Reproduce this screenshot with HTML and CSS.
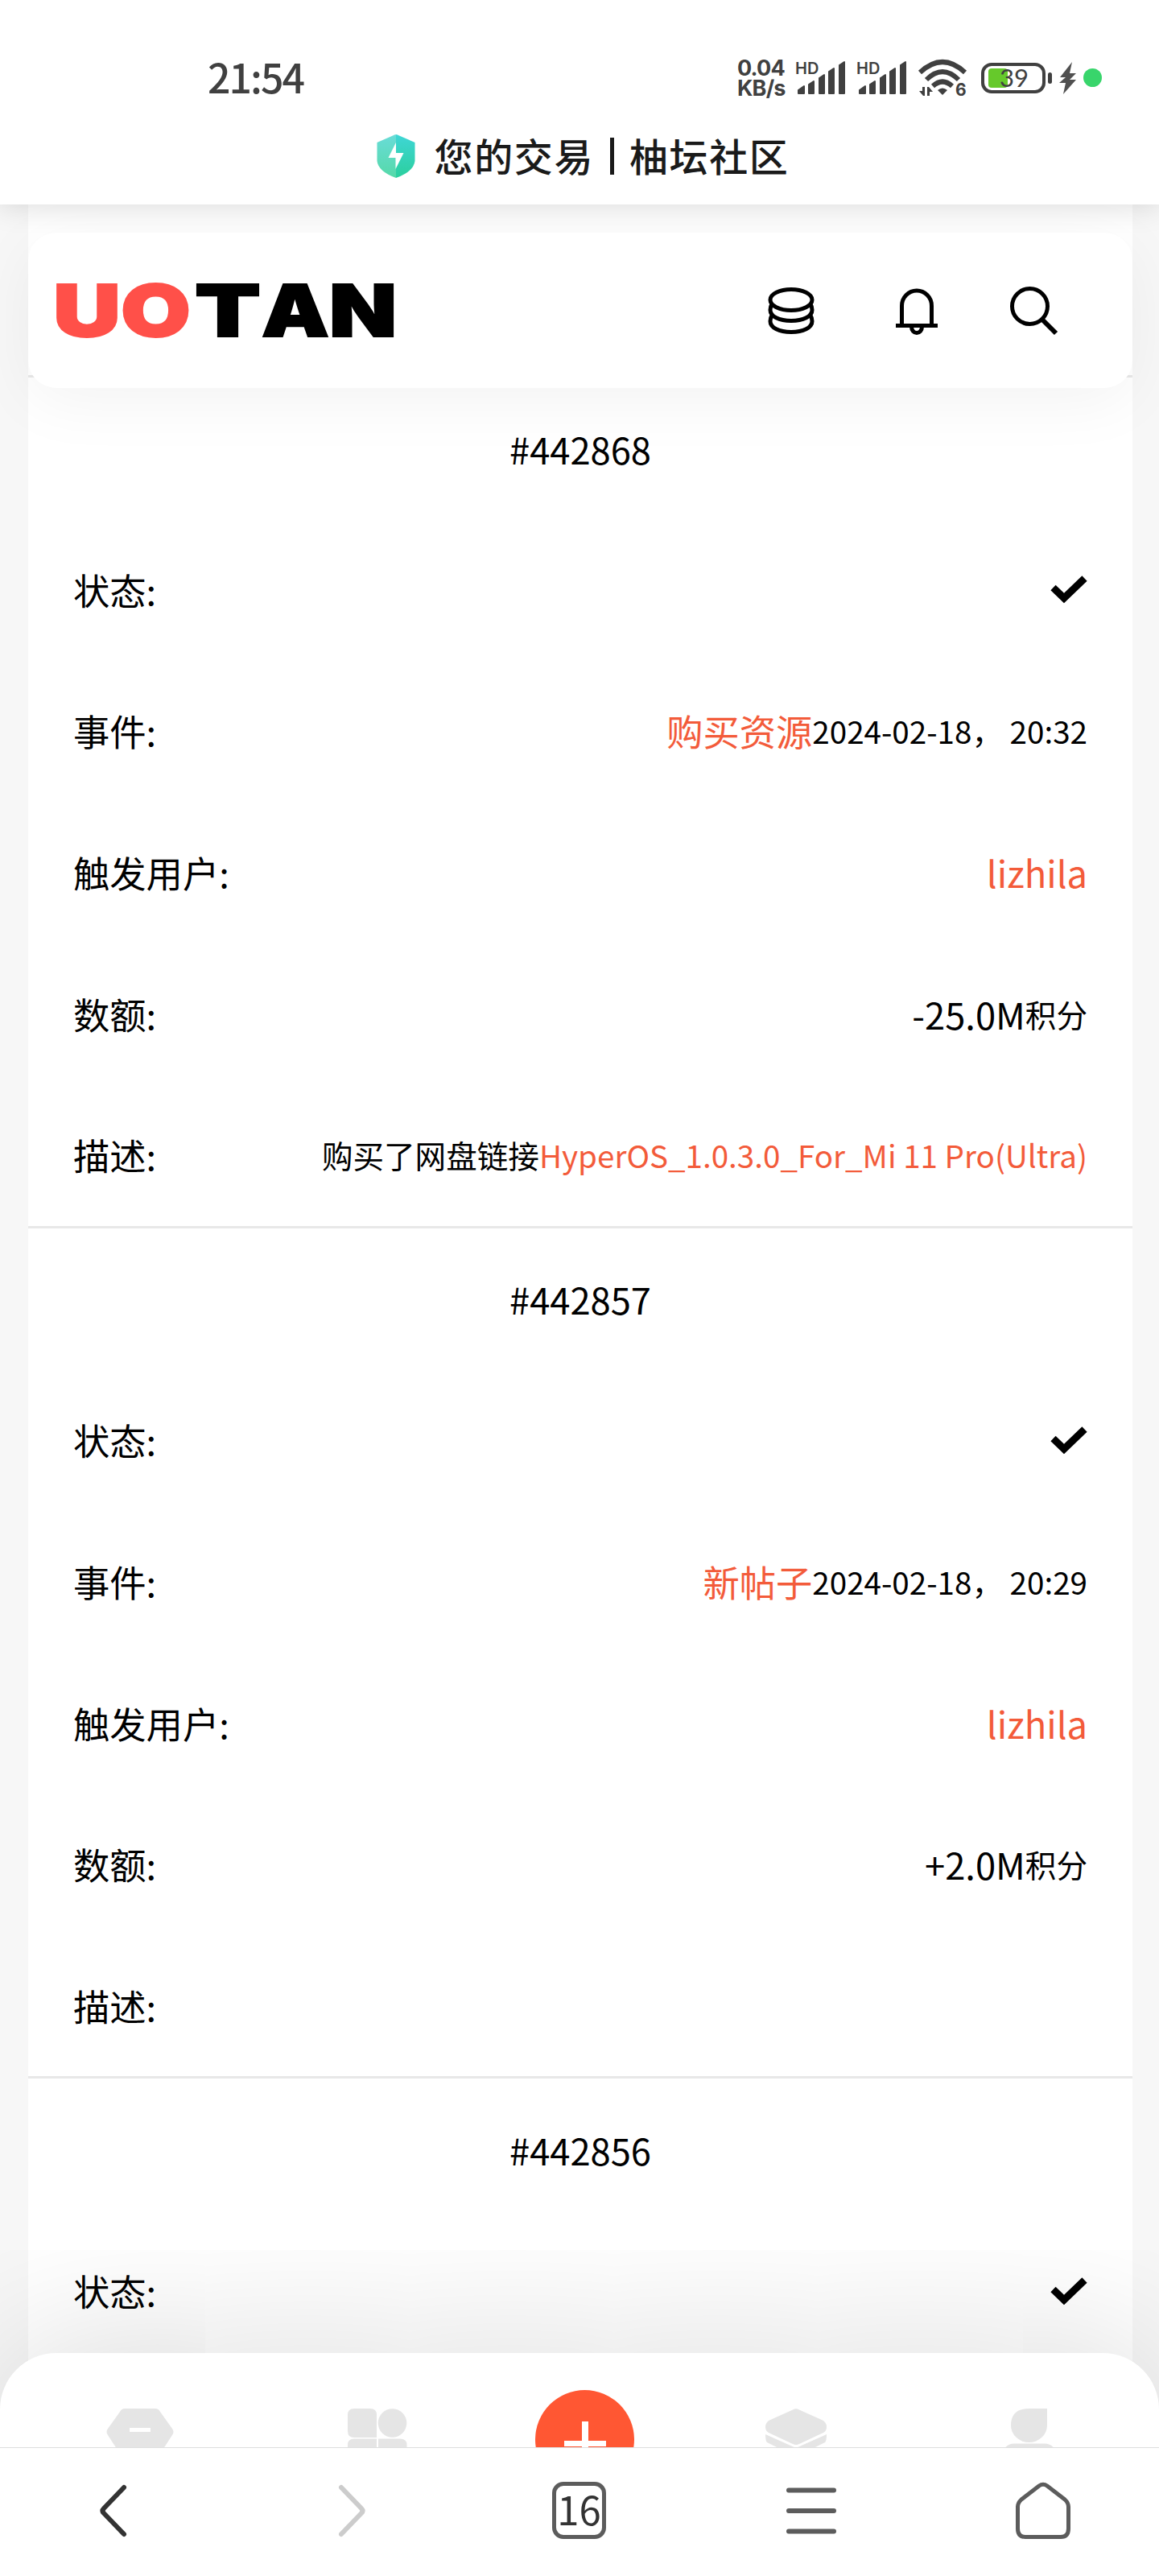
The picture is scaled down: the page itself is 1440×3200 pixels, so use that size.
FILE: index.html
```html
<!DOCTYPE html>
<html lang="zh-CN">
<head>
<meta charset="UTF-8" />
<meta name="viewport" content="width=device-width, initial-scale=1" />
<title>您的交易 | 柚坛社区</title>
<link rel="stylesheet" href="styles.css">
</head>
<body>
  <div class="topbar">
    <div class="status">
      <div class="time">21:54</div>
      <div class="status-right">
        <div class="speed"><span>0.04</span><span>KB/s</span></div>
        <svg class="signal" width="64" height="44" viewBox="0 0 64 44">
          <text x="-1" y="17">HD</text>
          <path d="M3 37l7-5v9h-7zM16 30l6-4v15h-6zM29 22l6-4v23h-6zM41 14l6-4v31h-6zM54 6l6-4v39h-6z"/>
        </svg>
        <svg class="signal" width="64" height="44" viewBox="0 0 64 44">
          <text x="-1" y="17">HD</text>
          <path d="M3 37l7-5v9h-7zM16 30l6-4v15h-6zM29 22l6-4v23h-6zM41 14l6-4v31h-6zM54 6l6-4v39h-6z"/>
        </svg>
        <svg class="wifi" width="60" height="48" viewBox="0 0 60 48">
          <g fill="none" stroke="#404040" stroke-width="6">
            <path d="M2 17Q30 -9 58 17"/>
            <path d="M10 26Q30 6 50 26"/>
            <path d="M18 34Q30 23 42 34"/>
          </g>
          <path d="M24 39Q30 34 36 39L30 45z"/>
          <path d="M5 35h3v11h-2l-5-6h4zM11 46V35h2l5 6h-4v5z"/>
          <text x="46" y="46">6</text>
        </svg>
        <svg class="battery" width="90" height="40" viewBox="0 0 90 40">
          <rect x="2" y="3" width="76" height="34" rx="11" fill="none" stroke="#404040" stroke-width="4"/>
          <rect x="9" y="8" width="24" height="24" rx="4" fill="#66c92b"/>
          <rect x="83" y="13" width="5" height="14" rx="2.5" fill="#404040"/>
          <text x="23" y="31">39</text>
        </svg>
        <svg class="bolt" width="24" height="42" viewBox="0 0 24 42">
          <path d="M17 1L2 20h7L1 27h8L6 41 22 23h-8l8-8h-8z" fill="#505050"/>
        </svg>
        <span class="dot"></span>
      </div>
    </div>
    <div class="page-title">
      <svg width="48" height="56" viewBox="0 0 48 56">
        <defs>
          <linearGradient id="shieldL" x1="0" y1="0" x2="0" y2="1"><stop offset="0" stop-color="#69dcd8"/><stop offset="1" stop-color="#55d9a8"/></linearGradient>
          <linearGradient id="shieldR" x1="0" y1="0" x2="0" y2="1"><stop offset="0" stop-color="#3fd6d6"/><stop offset="1" stop-color="#2bcf9d"/></linearGradient>
        </defs>
        <path d="M24 1Q22 1 20 2.500L.5 11V34Q2 47 24 55z" fill="url(#shieldL)"/>
        <path d="M24 1Q26 1 28 2.500L47.500 11V34Q46 47 24 55z" fill="url(#shieldR)"/>
        <path d="M24 11L14.500 30H23.500V44L33.500 24H24z" fill="#fff"/>
      </svg>
      <h1>您的交易<i></i>柚坛社区</h1>
    </div>
  </div>

  <div class="page">
    <div class="container">
      <header>
        <svg class="logo" width="424" height="72" viewBox="0 0 424 72">
          <g fill="#ff5049" stroke="#ff5049">
            <text x="-3" y="68" textLength="84" lengthAdjust="spacingAndGlyphs">U</text>
            <text x="81" y="68" textLength="87" lengthAdjust="spacingAndGlyphs">O</text>
          </g>
          <g fill="#000" stroke="#000">
            <text x="173" y="68" textLength="82" lengthAdjust="spacingAndGlyphs">T</text>
            <text x="256" y="68" textLength="84" lengthAdjust="spacingAndGlyphs">A</text>
            <text x="340" y="68" textLength="84" lengthAdjust="spacingAndGlyphs">N</text>
          </g>
        </svg>
        <div class="header-icons">
          <svg width="58" height="60" viewBox="0 0 58 60">
            <ellipse cx="29" cy="16.500" rx="26" ry="13"/>
            <path d="M5 22Q3 25 3 29C3 37 14 42.500 29 42.500S55 37 55 29Q55 25 53 22"/>
            <path d="M5 36Q3 39 3 43C3 51 14 56.500 29 56.500S55 51 55 43Q55 39 53 36"/>
          </svg>
          <svg width="54" height="60" viewBox="0 0 54 60">
            <path d="M8.500 48V24a18.500 19 0 0 1 37 0V48M1 48.500H53M20.500 50a6.500 7.500 0 0 0 13 0"/>
          </svg>
          <svg width="62" height="64" viewBox="0 0 62 64">
            <circle cx="25.500" cy="26.500" r="22"/>
            <path d="M41 43L58 60" stroke-width="6"/>
          </svg>
        </div>
      </header>

      <div class="records">
        <div class="record">
          <div class="row id">#442868</div>
          <div class="row"><span>状态:</span><svg class="check" width="46" height="36" viewBox="0 0 46 36"><path d="M3.500 16L17 29 42.500 4.500"/></svg></div>
          <div class="row"><span>事件:</span><div class="value"><a>购买资源</a><small>2024-02-18， 20:32</small></div></div>
          <div class="row"><span>触发用户:</span><div class="value"><a>lizhila</a></div></div>
          <div class="row"><span>数额:</span><div class="value">-25.0M<small>积分</small></div></div>
          <div class="row"><span>描述:</span><div class="value"><small>购买了网盘链接<a>HyperOS_1.0.3.0_For_Mi 11 Pro(Ultra)</a></small></div></div>
        </div>
        <div class="record">
          <div class="row id">#442857</div>
          <div class="row"><span>状态:</span><svg class="check" width="46" height="36" viewBox="0 0 46 36"><path d="M3.500 16L17 29 42.500 4.500"/></svg></div>
          <div class="row"><span>事件:</span><div class="value"><a>新帖子</a><small>2024-02-18， 20:29</small></div></div>
          <div class="row"><span>触发用户:</span><div class="value"><a>lizhila</a></div></div>
          <div class="row"><span>数额:</span><div class="value">+2.0M<small>积分</small></div></div>
          <div class="row"><span>描述:</span></div>
        </div>
        <div class="record">
          <div class="row id">#442856</div>
          <div class="row"><span>状态:</span><svg class="check" width="46" height="36" viewBox="0 0 46 36"><path d="M3.500 16L17 29 42.500 4.500"/></svg></div>
        </div>
      </div>
    </div>

    <div class="tabbar">
      <svg width="86" height="60" viewBox="0 0 86 60">
        <path d="M24 0H62Q66 0 68 4L83 25Q86 29 83 33L68 56H18L3 33Q0 29 3 25L18 4Q20 0 24 0z"/>
        <path d="M30 24h26v5H30z" fill="#fff"/>
      </svg>
      <svg class="tab-grid" width="74" height="74" viewBox="0 0 74 74">
        <path d="M8 0H28Q36 0 36 8V36H8Q0 36 0 28V8Q0 0 8 0z"/>
        <circle cx="55.500" cy="18" r="17.800"/>
        <path d="M8 37.500H36V74H0V45Q0 37.500 8 37.500zM38 37.500H65Q73.500 37.500 73.500 45V74H38z"/>
      </svg>
      <div class="add"><svg width="52" height="52" viewBox="0 0 52 52"><path d="M22 0h8v24h22v7H30v21h-8V31H0v-7h22z"/></svg></div>
      <svg class="tab-layers" width="76" height="60" viewBox="0 0 76 60">
        <path d="M34 1.500Q38 -1 42 1.500L72 15Q76 18 76 23T72 30L42 44Q38 46 34 44L4 30Q0 28 0 23T4 15z"/>
        <path d="M0 32L38 49 76 32Q76 40 74 42L42 58H34L2 42Q0 40 0 32z"/>
      </svg>
      <svg class="tab-user" width="62" height="60" viewBox="0 0 62 60">
        <path d="M31 0H53V21A22.500 21 0 0 1 8 21Q8 0 31 0z"/>
        <path d="M12 43.500H50Q58 43.500 62 50V60H0V50Q4 43.500 12 43.500z"/>
      </svg>
    </div>
  </div>

  <div class="browser-nav">
    <svg width="42" height="72" viewBox="0 0 42 72"><path d="M34 7L9 33Q6 36 9 39L34 65" stroke="#333"/></svg>
    <svg class="forward" width="42" height="72" viewBox="0 0 42 72"><path d="M8 7L33 33Q36 36 33 39L8 65" stroke="#ccc"/></svg>
    <div class="tabs">16</div>
    <svg class="menu" width="62" height="72" viewBox="0 0 62 72"><path d="M3 10.500H59M3 36H59M3 61.500H59" stroke="#5c5c5c"/></svg>
    <svg class="home" width="68" height="72" viewBox="0 0 68 72"><path d="M29 5Q34 1.500 39 5L61 22Q65.500 26 65.500 31V58Q65.500 68.500 56 68.500H12Q2.500 68.500 2.500 58V31Q2.500 26 7 22z" stroke="#5c5c5c" stroke-width="5"/></svg>
  </div>
</body>
</html>
```
FILE: styles.css
```css
* {
  box-sizing: border-box;
}
body {
  margin: 0;
  height: 3200px;
  display: flex;
  flex-direction: column;
  overflow: hidden;
  background: #f7f7f7;
  color: #000;
  font-family: "Noto Sans CJK SC", sans-serif;
}
svg {
  display: block;
  flex-shrink: 0;
  overflow: visible;
}
.topbar {
  position: relative;
  z-index: 3;
  height: 254px;
  background: #fff;
  box-shadow: 0 0 36px rgba(0, 0, 0, 0.16);
}
.status {
  display: flex;
  justify-content: space-between;
  align-items: center;
  height: 121px;
  padding: 72px 71px 0 258px;
  color: #404040;
}
.time {
  padding-bottom: 5px;
  font-size: 50px;
  font-weight: 500;
  line-height: 50px;
  letter-spacing: -2px;
}
.status-right {
  display: flex;
  align-items: center;
}
.status-right svg {
  fill: #404040;
}
.speed {
  display: flex;
  flex-direction: column;
  width: 73px;
  padding-top: 1px;
  font-family: Inter, sans-serif;
  font-size: 27px;
  font-weight: 700;
  line-height: 25px;
  letter-spacing: -0.8px;
}
.signal {
  margin-right: 12px;
  stroke: #404040;
  stroke-linejoin: round;
}
.signal text {
  font: 600 20px Inter, sans-serif;
  stroke: none;
}
.signal path {
  stroke-width: 2;
}
.wifi text {
  font: 700 21px Inter, sans-serif;
}
.battery {
  margin-left: 18px;
}
.battery text {
  font: 400 31px Lato, sans-serif;
}
.bolt {
  margin-left: 6px;
}
.dot {
  width: 23px;
  height: 23px;
  margin-left: 7px;
  border-radius: 50%;
  background: #38d56b;
}
.page-title {
  display: flex;
  justify-content: center;
  align-items: center;
  height: 146px;
  gap: 24px;
  padding-left: 8px;
}
.page-title h1 {
  display: flex;
  align-items: center;
  margin: 0;
  padding-bottom: 4px;
  font-size: 48px;
  font-weight: 500;
  line-height: 56px;
  letter-spacing: 1.6px;
  color: #1a1a1a;
}
.page-title i {
  width: 5px;
  height: 46px;
  margin: 4px 19px 0 20px;
  background: #1a1a1a;
}
.page {
  position: relative;
  flex: 1;
  overflow: hidden;
}
.container {
  height: 100%;
  margin: 0 33px 0 35px;
  padding-top: 35px;
  background: #fff;
}
header {
  position: relative;
  z-index: 2;
  display: flex;
  justify-content: space-between;
  align-items: center;
  height: 193px;
  padding: 0 91px 0 34px;
  border-radius: 35px;
  background: #fff;
  box-shadow: 0 16px 80px rgba(0, 0, 0, 0.05);
}
.logo text {
  font: 900 90px Inter, sans-serif;
  stroke-width: 2;
}
.header-icons {
  display: flex;
  align-items: center;
}
.header-icons svg {
  fill: none;
  stroke: #000;
  stroke-width: 5;
}
.header-icons svg + svg {
  margin-left: 100px;
}
.header-icons svg:last-child {
  margin-left: 88px;
}
.records {
  margin-top: -16px;
}
.record {
  border-top: 3px solid #e8e8e8;
}
.row {
  display: flex;
  justify-content: space-between;
  align-items: center;
  height: 175.6px;
  padding: 0 56px;
  font-size: 45.3px;
}
.row.id {
  justify-content: center;
}
.row a {
  color: #f35b3a;
}
.row small {
  font-size: 38.6px;
}
.value {
  display: flex;
  align-items: center;
}
.row span,
.value {
  padding-bottom: 1px;
}
.check {
  fill: none;
  stroke: #000;
  stroke-width: 9;
}
/* runs on below the browser bar */
.tabbar {
  position: absolute;
  z-index: 2;
  left: 0;
  right: 0;
  bottom: -120px;
  height: 237px;
  display: flex;
  align-items: flex-start;
  padding: 69px 0 0 131px;
  border-radius: 70px 70px 0 0;
  background: #fff;
  box-shadow: 0 0 200px rgba(0, 0, 0, 0.16);
}
.tabbar svg {
  fill: #e5e5e5;
}
.tab-grid {
  margin-left: 215px;
}
.add {
  display: flex;
  justify-content: center;
  width: 123px;
  height: 123px;
  margin: -23px 0 0 159px;
  padding-top: 39px;
  border-radius: 50%;
  background: #ff5733;
}
.tabbar .add svg {
  fill: #fff;
}
.tab-layers {
  margin-left: 163px;
}
.tab-user {
  margin-left: 221px;
}
.browser-nav {
  position: relative;
  z-index: 3;
  display: flex;
  height: 160px;
  padding: 42px 0 0 120px;
  border-top: 1px solid #dedede;
  background: #fff;
}
.browser-nav svg {
  fill: none;
  stroke-width: 6;
  stroke-linecap: round;
}
.forward {
  margin-left: 254px;
}
.tabs {
  width: 67px;
  height: 71px;
  margin-left: 228px;
  border: 5px solid #5c5c5c;
  border-radius: 14px;
  font-size: 49px;
  line-height: 56px;
  text-align: center;
  color: #333;
}
.menu {
  margin-left: 224px;
}
.home {
  margin-left: 223px;
}
```
